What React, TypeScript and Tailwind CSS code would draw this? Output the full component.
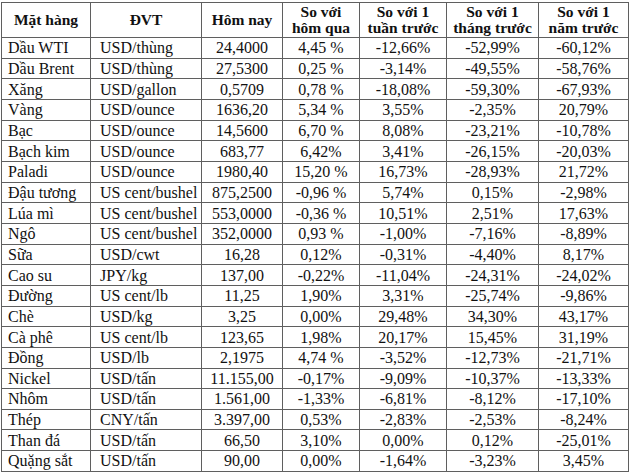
import React from 'react';

type Row = [string, string, string, string, string, string, string];

const rows: Row[] = [
  ['Dầu WTI', 'USD/thùng', '24,4000', '4,45 %', '-12,66%', '-52,99%', '-60,12%'],
  ['Dầu Brent', 'USD/thùng', '27,5300', '0,25 %', '-3,14%', '-49,55%', '-58,76%'],
  ['Xăng', 'USD/gallon', '0,5709', '0,78 %', '-18,08%', '-59,30%', '-67,93%'],
  ['Vàng', 'USD/ounce', '1636,20', '5,34 %', '3,55%', '-2,35%', '20,79%'],
  ['Bạc', 'USD/ounce', '14,5600', '6,70 %', '8,08%', '-23,21%', '-10,78%'],
  ['Bạch kim', 'USD/ounce', '683,77', '6,42%', '3,41%', '-26,15%', '-20,03%'],
  ['Paladi', 'USD/ounce', '1980,40', '15,20 %', '16,73%', '-28,93%', '21,72%'],
  ['Đậu tương', 'US cent/bushel', '875,2500', '-0,96 %', '5,74%', '0,15%', '-2,98%'],
  ['Lúa mì', 'US cent/bushel', '553,0000', '-0,36 %', '10,51%', '2,51%', '17,63%'],
  ['Ngô', 'US cent/bushel', '352,0000', '0,93 %', '-1,00%', '-7,16%', '-8,89%'],
  ['Sữa', 'USD/cwt', '16,28', '0,12%', '-0,31%', '-4,40%', '8,17%'],
  ['Cao su', 'JPY/kg', '137,00', '-0,22%', '-11,04%', '-24,31%', '-24,02%'],
  ['Đường', 'US cent/lb', '11,25', '1,90%', '3,31%', '-25,74%', '-9,86%'],
  ['Chè', 'USD/kg', '3,25', '0,00%', '29,48%', '34,30%', '43,17%'],
  ['Cà phê', 'US cent/lb', '123,65', '1,98%', '20,17%', '15,45%', '31,19%'],
  ['Đồng', 'USD/lb', '2,1975', '4,74 %', '-3,52%', '-12,73%', '-21,71%'],
  ['Nickel', 'USD/tấn', '11.155,00', '-0,17%', '-9,09%', '-10,37%', '-13,33%'],
  ['Nhôm', 'USD/tấn', '1.561,00', '-1,33%', '-6,81%', '-8,12%', '-17,10%'],
  ['Thép', 'CNY/tấn', '3.397,00', '0,53%', '-2,83%', '-2,53%', '-8,24%'],
  ['Than đá', 'USD/tấn', '66,50', '3,10%', '0,00%', '0,12%', '-25,01%'],
  ['Quặng sắt', 'USD/tấn', '90,00', '0,00%', '-1,64%', '-3,23%', '3,45%'],
];

const widths = ['w-[89px]', 'w-[111px]', 'w-[81px]', 'w-[77px]', 'w-[87px]', 'w-[92px]', 'w-[90px]'];

const headers = [
  ['Mặt hàng'],
  ['ĐVT'],
  ['Hôm nay'],
  ['So với', 'hôm qua'],
  ['So với 1', 'tuần trước'],
  ['So với 1', 'tháng trước'],
  ['So với 1', 'năm trước'],
];

export default function App() {
  return (
    <div className="w-[630px] h-[473px] bg-white pt-[2px] pl-[1px] text-[#111] font-['Liberation_Serif','Times_New_Roman',serif]">
      <table className="border-collapse table-fixed w-[628px]">
        <colgroup>
          {widths.map((w, i) => (
            <col key={i} className={w} />
          ))}
        </colgroup>
        <thead>
          <tr className="h-[35px]">
            {headers.map((h, i) => (
              <th
                key={i}
                className="border border-[#5f5f5f] p-0 text-center align-middle font-bold text-[15.5px] leading-[16px]"
              >
                {h.map((line, j) => (
                  <div key={j}>{line}</div>
                ))}
              </th>
            ))}
          </tr>
        </thead>
        <tbody>
          {rows.map((r, i) => (
            <tr key={i} className="h-[20.67px]">
              {r.map((cell, j) => (
                <td
                  key={j}
                  className={
                    'border border-[#5f5f5f] p-0 text-[16px] leading-[19px] whitespace-nowrap ' +
                    (j === 0 ? 'text-left pl-[6px]' : j === 1 ? 'text-left pl-[9px]' : 'text-center')
                  }
                >
                  {cell}
                </td>
              ))}
            </tr>
          ))}
        </tbody>
      </table>
    </div>
  );
}
